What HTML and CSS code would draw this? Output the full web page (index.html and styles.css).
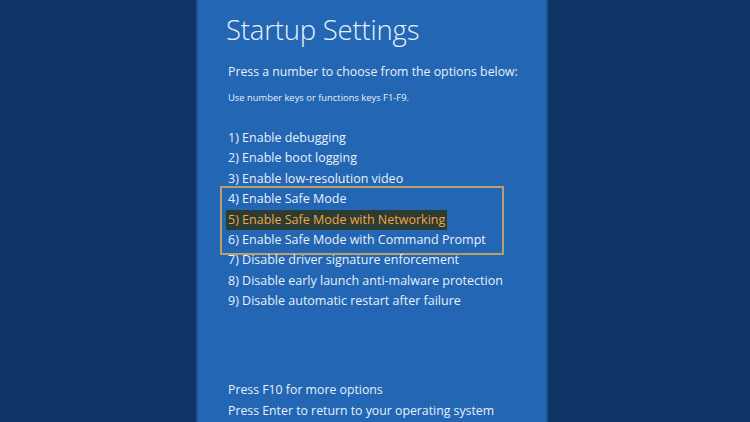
FILE: index.html
```html
<!DOCTYPE html>
<html>
<head>
<meta charset="utf-8">
<link rel="stylesheet" href="styles.css">
</head>
<body>
<div class="stage">
  <div class="panel">
    <h1 class="title">Startup Settings</h1>
    <p class="lead">Press a number to choose from the options below:</p>
    <p class="hint">Use number keys or functions keys F1-F9.</p>
    <ul class="options">
      <li>1) Enable debugging</li>
      <li>2) Enable boot logging</li>
      <li>3) Enable low-resolution video</li>
      <li class="boxed">
        <ul class="group">
          <li>4) Enable Safe Mode</li>
          <li><span class="selected">5) Enable Safe Mode with Networking</span></li>
          <li>6) Enable Safe Mode with Command Prompt</li>
        </ul>
      </li>
      <li>7) Disable driver signature enforcement</li>
      <li>8) Disable early launch anti-malware protection</li>
      <li>9) Disable automatic restart after failure</li>
    </ul>
    <div class="footer">
      <p>Press F10 for more options</p>
      <p>Press Enter to return to your operating system</p>
    </div>
  </div>
</div>
</body>
</html>
```
FILE: styles.css
```css
html, body {
  margin: 0;
  padding: 0;
  width: 750px;
  height: 422px;
  overflow: hidden;
  background: #0f3566;
}
.stage {
  display: flex;
  height: 422px;
  padding-left: 198px;
}
.panel {
  width: 348px;
  height: 422px;
  box-sizing: border-box;
  background: #2266b4;
  padding: 11px 0 0 29px;
  color: #e8f0fa;
  font-family: "Open Sans", "Noto Sans", sans-serif;
  display: flex;
  flex-direction: column;
  box-shadow: 2px 0 0 #1c4f8e, -2px 0 0 #1c4f8e;
}
.title {
  margin: 0 0 0 -1px;
  font-size: 27.5px;
  font-weight: 300;
  line-height: 38px;
  letter-spacing: -0.2px;
}
.lead {
  margin: 14px 0 0 1px;
  font-size: 12.3px;
  line-height: 18px;
}
.hint {
  margin: 10px 0 0 1px;
  font-size: 9.4px;
  line-height: 14px;
}
.options {
  list-style: none;
  margin: 23px 0 0 1px;
  padding: 0;
  font-size: 12.5px;
  line-height: 20.4px;
}
.options li {
  white-space: nowrap;
}
.boxed {
  margin: -3px 0 -5px -8px;
  width: 284px;
  box-sizing: border-box;
  border: 2px solid #bb9f68;
  padding: 1px 0 3px 6px;
}
.group {
  list-style: none;
  margin: 0;
  padding: 0;
}
.selected {
  display: inline-block;
  background: #2c3c32;
  color: #f0a64a;
  margin-left: -2px;
  padding: 0 2px 0 2px;
}
.footer {
  margin-top: auto;
  padding-bottom: 1px;
  margin-left: 1px;
  font-size: 12.3px;
  line-height: 20.4px;
}
.footer p {
  margin: 0;
}
```
